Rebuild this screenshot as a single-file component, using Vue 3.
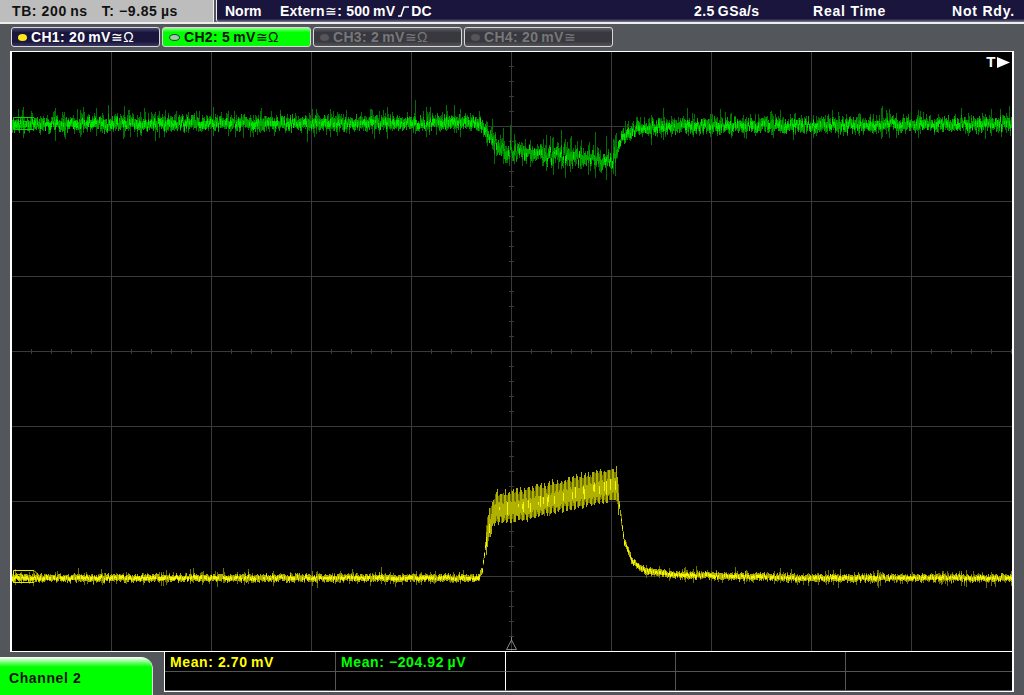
<script setup>
// seeded random so the traces stay the same on every load
let seed = 12345;
const rnd = () => {
  seed = (seed * 16807) % 2147483647;
  return seed / 2147483647;
};
const noise = () => (rnd() + rnd() + rnd()) / 1.5 - 1;

const lerpPoints = (pts, x) => {
  for (let i = 1; i < pts.length; i++) {
    if (x <= pts[i][0]) {
      const [x0, y0] = pts[i - 1];
      const [x1, y1] = pts[i];
      return y0 + ((y1 - y0) * (x - x0)) / (x1 - x0);
    }
  }
  return pts[pts.length - 1][1];
};

const bar = (x, a, b) => `M${x + 0.5} ${Math.round(a)}V${Math.round(b)}`;

const greenMid = [[12, 124], [478, 123], [486, 133], [497, 149], [530, 153], [575, 158], [612, 161], [622, 137], [634, 130], [680, 126], [1012, 124]];
const yellowMid = [[12, 578], [478, 578], [482, 570], [487, 532], [495, 510], [530, 505], [570, 495], [616, 485], [619, 505], [624, 542], [632, 562], [645, 571], [680, 575], [800, 578], [1012, 578]];

let g1 = "", g2 = "", g3 = "";
for (let x = 12; x < 1012; x++) {
  const m = lerpPoints(greenMid, x);
  const inDip = x > 492 && x < 618;
  const c = m + noise() * (inDip ? 9 : 5);
  const spike = rnd() < 0.25 ? 9 + rnd() * 8 : 5 + rnd() * 4;
  const scale = inDip ? 1.3 : 1;
  g1 += bar(x, c - spike * scale * (0.3 + rnd()), c + spike * scale * (0.3 + rnd() * 0.7));
  g2 += bar(x, c - 2 - rnd() * 5, c + 2 + rnd() * 5);
  if (!inDip && rnd() < 0.65) g3 += bar(x, c - 1 - rnd() * 3, c + 1 + rnd() * 3);
  if (inDip && rnd() < 0.3) g3 += bar(x, c - 1 - rnd() * 3, c + 1 + rnd() * 3);
}

let y1 = "", y2 = "", y3 = "";
for (let x = 12; x < 1012; x++) {
  const m = lerpPoints(yellowMid, x);
  const hump = x >= 486 && x <= 618;
  if (hump) {
    const amp = 12 + rnd() * 2;
    const top = m - amp - rnd() * 4;
    const bot = m + amp + rnd() * 3;
    if (x % 4 < 2) {
      y2 += bar(x, top - rnd() * 4, m + 6 + rnd() * 3);
      y1 += bar(x, m + 6, bot - 6 * rnd());
    } else {
      y2 += bar(x, m - 5 - rnd() * 3, bot);
      y1 += bar(x, top, m - 5);
    }
    if (rnd() < 0.15) y3 += bar(x, m - 8 * rnd(), m + 8 * rnd());
  } else {
    const c = m + noise() * 2.2;
    const spike = rnd() < 0.18 ? 5 + rnd() * 5 : 3 + rnd() * 2;
    y1 += bar(x, c - spike * (0.4 + rnd() * 0.6), c + spike * (0.4 + rnd() * 0.6));
    y2 += bar(x, c - 2 - rnd() * 2, c + 2 + rnd() * 2);
    if (rnd() < 0.75) y3 += bar(x, c - 1 - rnd(), c + 1 + rnd());
  }
}

const vLines = [111, 211, 311, 411, 511, 611, 711, 811, 911];
const hLines = [126, 201, 276, 351, 426, 501, 576];
const xTicks = [];
for (let x = 31; x < 1012; x += 20) xTicks.push(x);
const yTicks = [];
for (let y = 66; y < 650; y += 15) yTicks.push(y);

const channels = [
  { id: "ch1", label: "CH1: 20\u2009mV", sym: "≅Ω" },
  { id: "ch2", label: "CH2: 5\u2009mV", sym: "≅Ω" },
  { id: "ch3", label: "CH3: 2\u2009mV", sym: "≅Ω" },
  { id: "ch4", label: "CH4: 20\u2009mV", sym: "≅" },
];
</script>

<template>
  <div class="scope">
    <header class="top">
      <div class="timebase">
        <span>TB: 200&#8201;ns</span>
        <span>T: −9.85&#8201;µs</span>
      </div>
      <div class="status">
        <span class="st-norm">Norm</span>
        <span class="st-trig">Extern<small>≅</small>: 500&#8201;mV&#8201;<svg class="edge" width="11" height="11" viewBox="0 0 11 11"><path d="M0 10H3L6 1H11" fill="none" stroke="#fff" stroke-width="1.6" /></svg>DC</span>
        <span class="st-rate">2.5&#8201;GSa/s</span>
        <span class="st-mode">Real Time</span>
        <span class="st-ready">Not Rdy.</span>
      </div>
    </header>

    <nav class="channels">
      <div v-for="c in channels" :key="c.id" class="chan" :class="c.id">
        <i class="led"></i>
        <span>{{ c.label }}<small>{{ c.sym }}</small></span>
      </div>
    </nav>

    <main class="screen">
      <svg class="plot" width="1000" height="599" viewBox="12 52 1000 599">
        <g stroke="#3a3a3a" stroke-width="1" shape-rendering="crispEdges">
          <path v-for="x in vLines" :key="'v' + x" :d="`M${x + 0.5} 52V651`" />
          <path v-for="y in hLines" :key="'h' + y" :d="`M12 ${y + 0.5}H1012`" />
          <path v-for="x in xTicks" :key="'tx' + x" :d="`M${x + 0.5} 349V354`" />
          <path v-for="y in yTicks" :key="'ty' + y" :d="`M509 ${y + 0.5}H514`" />
        </g>
        <g fill="none" stroke-width="1" shape-rendering="crispEdges">
          <path :d="g1" stroke="#007000" />
          <path :d="g2" stroke="#00a800" />
          <path :d="g3" stroke="#00e800" />
          <path :d="y1" stroke="#6e6e00" />
          <path :d="y2" stroke="#b0b000" />
          <path :d="y3" stroke="#f4f400" />
        </g>
        <path d="M13.5 117.5H34L40 123.5L34 129.5H13.5Z" fill="none" stroke="#00d800" />
        <text x="16" y="127" class="tag" fill="#00d800">C2</text>
        <path d="M13.5 570.5H34L40 576.5L34 582.5H13.5Z" fill="none" stroke="#e6e600" />
        <text x="16" y="580" class="tag" fill="#e6e600">C1</text>
        <path d="M511.5 637V641M511.5 640L506.5 649.5H516.5Z" fill="none" stroke="#8a8a8a" />
      </svg>
      <div class="trig-flag">T<svg width="13" height="11" viewBox="0 0 13 11"><path d="M0 0L13 5.5L0 11Z" fill="#fff" /></svg></div>
    </main>

    <footer class="bottom">
      <div class="tab">Channel 2</div>
      <div class="meas">
        <div class="cell c1 yellow">Mean: 2.70&#8201;mV</div>
        <div class="cell c2 green">Mean: −204.92&#8201;µV</div>
        <div class="cell c3"></div>
        <div class="cell c4"></div>
        <div class="cell c5"></div>
        <div class="cell c1"></div>
        <div class="cell c2"></div>
        <div class="cell c3"></div>
        <div class="cell c4"></div>
        <div class="cell c5"></div>
      </div>
    </footer>
  </div>
</template>

<style>
html, body {
  margin: 0;
  background: #53565a;
}
</style>

<style scoped>
.scope {
  width: 1024px;
  height: 695px;
  overflow: hidden;
  background: #53565a;
  font-family: "Liberation Sans", Arial, sans-serif;
  font-weight: 700;
  font-size: 14px;
  letter-spacing: 0.6px;
  color: #fff;
}

small {
  font-size: 14px;
  font-weight: 400;
  letter-spacing: 0.4px;
}

.top {
  display: flex;
  height: 22px;
  border-bottom: 2px solid #eee;
}

.timebase {
  width: 201px;
  padding-left: 12px;
  background: #bdbdbd;
  color: #111;
  display: flex;
  gap: 14px;
  line-height: 23px;
  border-right: 1px solid #eee;
}

.status {
  margin-left: 2px;
  flex: 1;
  display: flex;
  line-height: 23px;
  background: linear-gradient(#19153d 85%, #77778a);
  border-left: 1px solid #eee;
  border-bottom-left-radius: 3px;
}

.st-norm { margin-left: 8px; width: 55px; letter-spacing: 0; }
.st-trig { width: 414px; letter-spacing: 0.2px; }
.edge { vertical-align: -1px; margin-right: 2px; }
.st-rate { width: 119px; letter-spacing: 0.4px; }
.st-mode { width: 139px; letter-spacing: 0.8px; }
.st-ready { letter-spacing: 0.8px; }

.channels {
  display: flex;
  gap: 2px;
  padding: 3px 0 0 11px;
  height: 20px;
}

.chan {
  width: 149px;
  height: 20px;
  box-sizing: border-box;
  border: 1px solid #d8d8d8;
  border-radius: 3px;
  display: flex;
  align-items: center;
  gap: 4px;
  padding-left: 6px;
  letter-spacing: 0.3px;
  background: linear-gradient(#4b4870, #19153d 25%, #19153d 75%, #3a3760);
}

.led {
  flex: none;
  width: 9px;
  height: 7px;
  border-radius: 50%;
  background: #ffe81a;
}

.ch2 {
  background: linear-gradient(#8cff8c, #00ff00 25%, #00ff00);
  color: #111;
}
.ch2 .led { background: #9ad29a; border: 1px solid #335; width: 9px; height: 5px; }

.ch3, .ch4 {
  background: linear-gradient(#5f5f66, #38383e 25%, #38383e 75%, #55555a);
  color: #77777b;
}
.ch3 .led, .ch4 .led { background: #55555a; }

.screen {
  position: relative;
  width: 1000px;
  height: 599px;
  margin: 4px 0 0 10px;
  border: 2px solid #fff;
  border-top-width: 1px;
  border-bottom-width: 1px;
  background: #000;
}

.plot {
  display: block;
}

.tag {
  font-size: 9px;
  font-weight: 400;
  letter-spacing: 0;
}

.trig-flag {
  position: absolute;
  top: 0;
  right: 2px;
  display: flex;
  align-items: center;
  gap: 1px;
  font-size: 15px;
  line-height: 20px;
}

.bottom {
  display: flex;
  align-items: flex-start;
  height: 43px;
}

.tab {
  width: 143px;
  height: 38px;
  margin-top: 5px;
  padding-left: 9px;
  line-height: 42px;
  color: #111;
  letter-spacing: 0.6px;
  border-top-right-radius: 12px;
  border-right: 1px solid #ddd;
  background: linear-gradient(#fff, #00ff00 10px);
}

.meas {
  margin-left: 11px;
  width: 847px;
  height: 39px;
  display: grid;
  grid-template-columns: 171px 170px 170px 170px 166px;
  grid-template-rows: 20px 19px;
  background: #000;
  border: 2px solid #fff;
  border-width: 0 2px 1px 1px;
}

.cell {
  border-right: 1px solid #555;
  border-bottom: 1px solid #555;
  padding-left: 5px;
  line-height: 20px;
  box-sizing: border-box;
  white-space: nowrap;
}
.cell.c2 { border-right-color: #fff; }
.cell.c5 { border-right: 0; }

.yellow { color: #ffff00; }
.green { color: #00ff00; }
</style>
